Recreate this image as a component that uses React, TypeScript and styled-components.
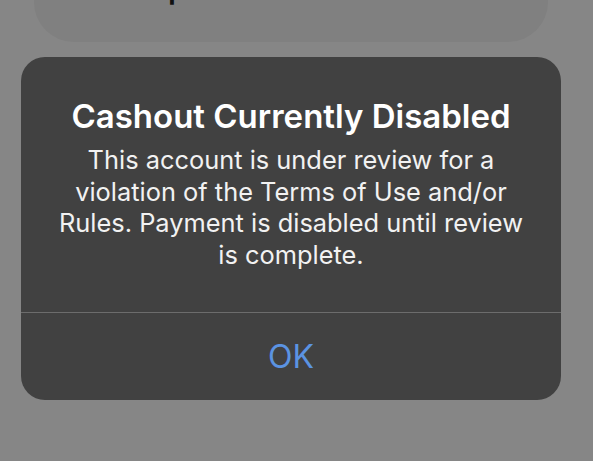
import styled, { createGlobalStyle } from "styled-components";

const GlobalStyle = createGlobalStyle`
	html, body {
		margin: 0;
		padding: 0;
		height: 100%;
		overflow: hidden;
		background-color: #868686;
		font-family: Inter, "Noto Sans", sans-serif;
	}
`;

const Screen = styled.div`
	width: 593px;
	height: 461px;
	display: flex;
	flex-direction: column;
	overflow: hidden;
`;

const BackCard = styled.div`
	width: 514px;
	height: 90px;
	margin: -48px 0 0 34px;
	padding-left: 112px;
	box-sizing: border-box;
	display: flex;
	align-items: flex-end;
	background-color: #808080;
	border-radius: 40px;
`;

const BackLabel = styled.span`
	font-size: 30px;
	font-weight: 600;
	color: #111111;
	line-height: 30px;
	margin-bottom: 39px;
`;

const Alert = styled.div`
	width: 540px;
	margin: 15px 0 0 21px;
	display: flex;
	flex-direction: column;
	background-color: #414141;
	border-radius: 24px;
	overflow: hidden;
`;

const AlertContent = styled.div`
	display: flex;
	flex-direction: column;
	align-items: center;
	padding: 39px 32px 41px;
	text-align: center;
	color: #ffffff;
`;

const AlertTitle = styled.h2`
	margin: 0;
	font-size: 33px;
	font-weight: 600;
	line-height: 40px;
`;

const AlertMessage = styled.p`
	margin: 8px 0 0;
	font-size: 25.4px;
	font-weight: 400;
	line-height: 31.7px;
	color: #f2f2f2;
`;

const AlertAction = styled.button`
	height: 88px;
	padding: 0;
	border: none;
	border-top: 1px solid #6c6c6c;
	background: transparent;
	color: #5b93e2;
	font-family: Inter, "Noto Sans", sans-serif;
	font-size: 32px;
	font-weight: 400;
	cursor: pointer;
`;

export default function App() {
	return (
		<Screen>
			<GlobalStyle />
			<BackCard>
				<BackLabel>Update</BackLabel>
			</BackCard>
			<Alert>
				<AlertContent>
					<AlertTitle>Cashout Currently Disabled</AlertTitle>
					<AlertMessage>
						This account is under review for a violation of the Terms of Use and/or Rules. Payment is
						disabled until review is complete.
					</AlertMessage>
				</AlertContent>
				<AlertAction>OK</AlertAction>
			</Alert>
		</Screen>
	);
}
